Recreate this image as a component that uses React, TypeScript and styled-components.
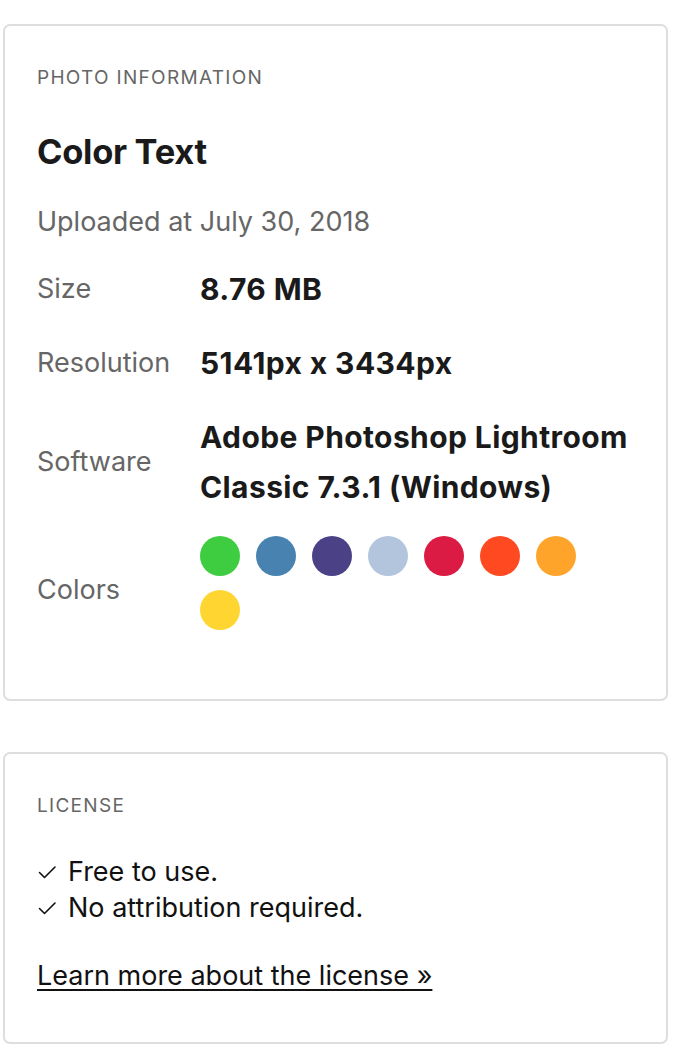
import React from "react";
import styled, { createGlobalStyle } from "styled-components";

const GlobalStyle = createGlobalStyle`
  html, body { margin: 0; padding: 0; background: #fff; }
  body { font-family: Inter, "Noto Sans", "Liberation Sans", sans-serif; color: #111; -webkit-font-smoothing: antialiased; }
`;

const Page = styled.div`
  display: flex;
  flex-direction: column;
  gap: 51px;
  padding: 24px 16px 0 3px;
`;

const Card = styled.section<{ $pt: number; $pb: number }>`
  border: 2px solid #dedede;
  border-radius: 7px;
  padding: ${(p) => `${p.$pt}px 32px ${p.$pb}px`};
`;

const Kicker = styled.h3`
  margin: 0;
  font-size: 19px;
  line-height: 24px;
  font-weight: 400;
  letter-spacing: 1.3px;
  color: #666;
  text-transform: uppercase;
`;

const Title = styled.h1`
  margin: 40px 0 0;
  font-size: 34.5px;
  line-height: 44px;
  font-weight: 700;
  color: #1a1a1a;
  letter-spacing: -0.3px;
`;

const Uploaded = styled.p`
  margin: 30px 0 0;
  font-size: 27px;
  line-height: 36px;
  color: #666;
`;

const InfoList = styled.dl`
  margin: 24px 0 0;
  display: grid;
  grid-template-columns: 163px 1fr;
  row-gap: 24px;
  align-items: center;
`;

const Label = styled.dt`
  margin: 0;
  font-size: 27px;
  line-height: 50px;
  color: #666;
`;

const Value = styled.dd`
  margin: 0;
  font-size: 30px;
  line-height: 50px;
  letter-spacing: 0.4px;
  font-weight: 700;
  color: #1a1a1a;
`;

const Swatches = styled.dd`
  margin: 0;
  display: flex;
  flex-wrap: wrap;
`;

const Swatch = styled.span<{ $c: string }>`
  width: 40px;
  height: 40px;
  border-radius: 50%;
  background: ${(p) => p.$c};
  margin: 0 16px 14px 0;
`;

const Checks = styled.ul`
  list-style: none;
  margin: 36px 0 0;
  padding: 0;
`;

const CheckItem = styled.li`
  display: flex;
  align-items: center;
  gap: 8px;
  font-size: 27px;
  line-height: 36px;
  color: #111;
`;

const LicenseLink = styled.a`
  display: inline-block;
  margin-top: 32px;
  font-size: 27px;
  line-height: 36px;
  color: #111;
  text-decoration: underline;
  text-underline-offset: 4px;
  text-decoration-thickness: 2px;
`;

const Tick = () => (
  <svg width="23" height="16" viewBox="0 0 23 16" fill="none" aria-hidden>
    <path d="M2.5 8.5 L7.5 13.5 L18 3" stroke="#111" strokeWidth="1.6" strokeLinecap="round" strokeLinejoin="round" />
  </svg>
);

const colors = ["#3ecc40", "#4782b0", "#4a4187", "#b2c5dd", "#db1b43", "#ff4920", "#ffa42b", "#ffd631"];

export default function App() {
  return (
    <>
      <GlobalStyle />
      <Page>
        <Card $pt={40} $pb={55}>
          <Kicker>Photo Information</Kicker>
          <Title>Color Text</Title>
          <Uploaded>Uploaded at July 30, 2018</Uploaded>
          <InfoList>
            <Label>Size</Label>
            <Value>8.76 MB</Value>
            <Label>Resolution</Label>
            <Value>5141px x 3434px</Value>
            <Label>Software</Label>
            <Value>Adobe Photoshop Lightroom Classic 7.3.1 (Windows)</Value>
            <Label>Colors</Label>
            <Swatches>
              {colors.map((c) => (
                <Swatch key={c} $c={c} />
              ))}
            </Swatches>
          </InfoList>
        </Card>
        <Card $pt={40} $pb={48}>
          <Kicker>License</Kicker>
          <Checks>
            <CheckItem>
              <Tick />
              Free to use.
            </CheckItem>
            <CheckItem>
              <Tick />
              No attribution required.
            </CheckItem>
          </Checks>
          <LicenseLink href="#">Learn more about the license »</LicenseLink>
        </Card>
      </Page>
    </>
  );
}
